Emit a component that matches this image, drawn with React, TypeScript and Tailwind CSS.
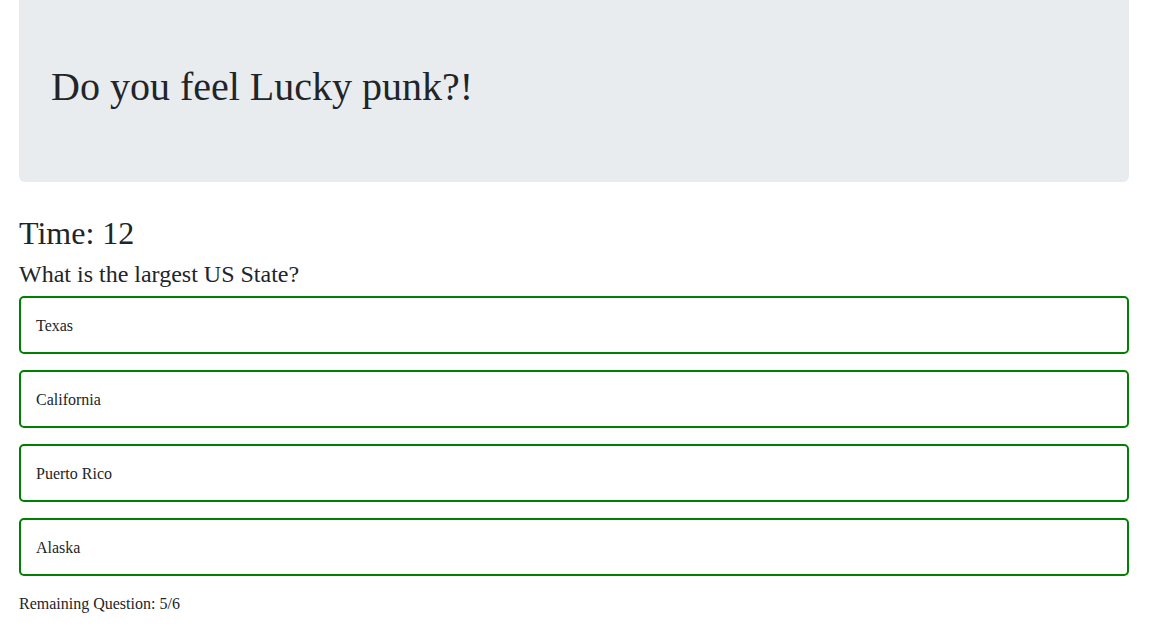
const answers = ["Texas", "California", "Puerto Rico", "Alaska"];

export default function App() {
  return (
    <div
      className="min-h-screen bg-white text-[#212529]"
      style={{ fontFamily: '"Liberation Serif", "Times New Roman", serif' }}
    >
      <div className="ml-[19px] w-[1110px]">
        <div className="rounded-b-md bg-[#e9ecef] px-8 pb-[71px] pt-[63px]">
          <h1 className="text-[40px] leading-[1.2]">Do you feel Lucky punk?!</h1>
        </div>

        <h3 className="mt-8 text-[32px] leading-[1.2]">Time: 12</h3>
        <h5 className="mt-2 text-[24px] leading-[1.2]">
          What is the largest US State?
        </h5>

        <div className="mt-[7px] flex flex-col gap-4">
          {answers.map((a) => (
            <button
              key={a}
              className="flex h-[58px] items-center rounded-[5px] border-2 border-[#008000] bg-white px-[15px] pt-[2px] text-left text-[16px]"
            >
              {a}
            </button>
          ))}
        </div>

        <p className="mt-4 text-[16px] leading-6">Remaining Question: 5/6</p>
      </div>
    </div>
  );
}
